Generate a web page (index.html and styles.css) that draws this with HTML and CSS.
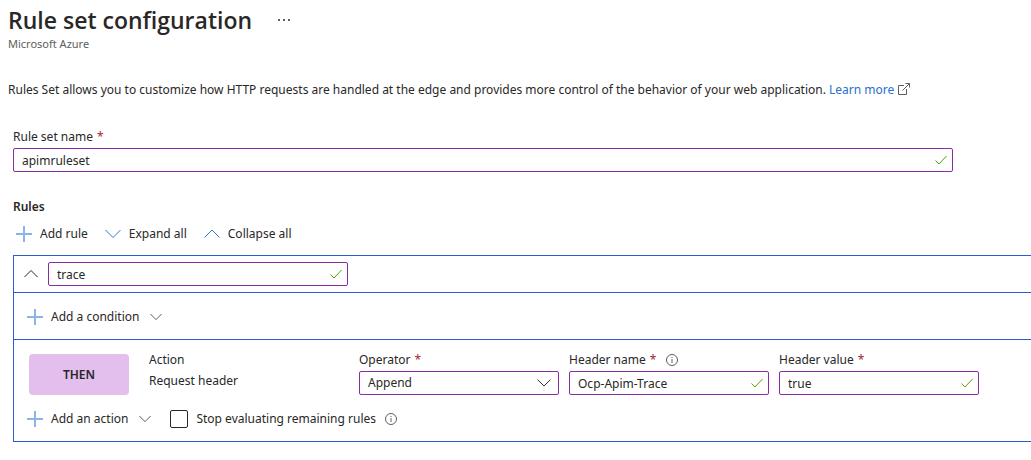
FILE: index.html
```html
<!DOCTYPE html>
<html lang="en">
<head>
<meta charset="utf-8">
<title>Rule set configuration</title>
<link rel="stylesheet" href="styles.css">
</head>
<body>
<svg class="defs" aria-hidden="true">
  <symbol id="plus" viewBox="0 0 16 16"><path d="M8 0v16M0 8h16"/></symbol>
  <symbol id="down" viewBox="0 0 16 16"><path d="M0.500 4l7.500 7.500L15.500 4"/></symbol>
  <symbol id="up" viewBox="0 0 16 16"><path d="M0.500 11.500L8 4l7.500 7.500"/></symbol>
  <symbol id="check" viewBox="0 0 12 12"><path d="M0.500 6.500l3.500 3.500L11.500 2"/></symbol>
  <symbol id="info" viewBox="0 0 12 12"><circle cx="6" cy="6" r="5.500"/><path d="M6 5v4M6 3v1"/></symbol>
  <symbol id="external" viewBox="0 0 12 12"><path d="M6 2.500H0.500v9h8V6M4.500 7.500l7-7M7.500 0.500h4v4"/></symbol>
</svg>
<header class="header">
  <div class="title-row">
    <h1 class="title">Rule set configuration</h1>
    <button class="more" type="button" aria-label="More options"><svg class="dots" viewBox="0 0 12 2"><path d="M0 0h2v2H0zM5 0h2v2H5zM10 0h2v2h-2z"/></svg></button>
  </div>
  <p class="subtitle">Microsoft Azure</p>
</header>
<p class="intro">Rules Set allows you to customize how HTTP requests are handled at the edge and provides more control of the behavior of your web application. <a class="link" href="#">Learn more<svg class="icon small gray"><use href="#external"/></svg></a></p>
<main class="main">
  <div class="field name-field">
    <label class="label" for="set-name">Rule set name <span class="required">*</span></label>
    <div class="control"><input class="input" id="set-name" type="text" value="apimruleset"><svg class="icon small check"><use href="#check"/></svg></div>
  </div>
  <h2 class="section-title">Rules</h2>
  <div class="toolbar">
    <button class="command" type="button"><svg class="icon blue plus"><use href="#plus"/></svg>Add rule</button>
    <button class="command" type="button"><svg class="icon blue"><use href="#down"/></svg>Expand all</button>
    <button class="command" type="button"><svg class="icon blue"><use href="#up"/></svg>Collapse all</button>
  </div>
  <section class="rule">
    <div class="rule-head">
      <button class="toggle" type="button" aria-label="Collapse rule"><svg class="icon medium dark"><use href="#up"/></svg></button>
      <div class="control rule-name"><input class="input" type="text" value="trace" aria-label="Rule name"><svg class="icon small check"><use href="#check"/></svg></div>
    </div>
    <div class="conditions">
      <button class="command add" type="button"><svg class="icon blue plus"><use href="#plus"/></svg>Add a condition<svg class="icon small gray caret-end"><use href="#down"/></svg></button>
    </div>
    <div class="actions">
      <div class="action-row">
        <div class="then">THEN</div>
        <div class="action-type"><span class="label">Action</span><span class="action-name">Request header</span></div>
        <div class="field">
          <label class="label" for="operator">Operator <span class="required">*</span></label>
          <div class="control"><select class="input select" id="operator"><option>Append</option></select><svg class="icon medium dark caret"><use href="#down"/></svg></div>
        </div>
        <div class="field">
          <label class="label" for="header-name">Header name <span class="required">*</span><svg class="icon small gray info"><use href="#info"/></svg></label>
          <div class="control"><input class="input" id="header-name" type="text" value="Ocp-Apim-Trace"><svg class="icon small check"><use href="#check"/></svg></div>
        </div>
        <div class="field">
          <label class="label" for="header-value">Header value <span class="required">*</span></label>
          <div class="control"><input class="input" id="header-value" type="text" value="true"><svg class="icon small check"><use href="#check"/></svg></div>
        </div>
      </div>
      <div class="action-footer">
        <button class="command add" type="button"><svg class="icon blue plus"><use href="#plus"/></svg>Add an action<svg class="icon small gray caret-end"><use href="#down"/></svg></button>
        <label class="stop"><input class="checkbox" type="checkbox">Stop evaluating remaining rules</label>
        <svg class="icon small gray"><use href="#info"/></svg>
      </div>
    </div>
  </section>
</main>
</body>
</html>
```
FILE: styles.css
```css
* { box-sizing: border-box; }
body {
  margin: 0;
  background: #fff;
  color: #292827;
  font: 12px/18px "Segoe UI", "Noto Sans", "Open Sans", sans-serif;
}
h1, h2, p { margin: 0; }
button, input, select { font: inherit; color: inherit; }
button { border: 0; padding: 0; background: none; cursor: pointer; }
.defs { position: absolute; width: 0; height: 0; }
symbol path { vector-effect: non-scaling-stroke; }

.icon { width: 16px; height: 16px; flex: none; fill: none; stroke: currentColor; stroke-width: 1; }
.icon.small { width: 12px; height: 12px; }
.icon.medium { width: 14px; height: 14px; }
.blue { color: #2f74d5; }
.icon.plus { color: #8ab4ea; stroke-width: 2; }
.gray { color: #605e5c; }
.dark { color: #292827; }

.header { padding: 4px 8px 0; }
.title-row { display: flex; align-items: center; gap: 26px; }
.title { font-family: "Segoe UI", "Open Sans", sans-serif; font-size: 23px; line-height: 32px; font-weight: 600; }
.more { display: flex; }
.dots { width: 12px; height: 2px; fill: #605e5c; }
.subtitle { font-size: 11px; line-height: 16px; color: #605e5c; }
.intro { padding: 29px 8px 0; }
.link { color: #2a6fd0; text-decoration: none; }
.link .icon { margin-left: 4px; vertical-align: -1px; }

.main { padding: 28px 0 18px 13px; }
.label { display: flex; align-items: center; gap: 4px; height: 20px; }
.required { color: #a4262c; }
.info { margin-left: 6px; }
.field { flex: 0 1 200px; display: flex; flex-direction: column; gap: 1px; }
.name-field { max-width: 940px; }
.control { position: relative; }
.input {
  display: block;
  width: 100%;
  height: 24px;
  padding: 0 32px 0 8px;
  border: 1px solid #8a2da5;
  border-radius: 2px;
  background: #fff;
  outline: 0;
}
.select { appearance: none; }
.control .icon { position: absolute; right: 6px; top: 6px; pointer-events: none; }
.control .caret { right: 8px; top: 5px; }
.icon.check { color: #57a300; }

.section-title { margin-top: 26px; font-size: 12px; line-height: 18px; font-weight: 600; }
.toolbar { display: flex; gap: 17px; padding: 6px 3px 9px; }
.command { display: flex; align-items: center; gap: 8px; height: 24px; }
.caret-end { margin-left: 3px; }

.rule { border: 1px solid #2b5cd0; border-right: 0; }
.rule-head { display: flex; align-items: center; gap: 10px; padding: 6px 10px; border-bottom: 1px solid #2b5cd0; }
.toggle { display: flex; }
.rule-name { flex: 0 1 300px; }
.conditions { padding: 12px 13px 10px; border-bottom: 1px solid #2b5cd0; }
.actions { padding: 10px 13px; }
.action-row { display: flex; gap: 10px; padding-left: 2px; }
.then {
  flex: none;
  display: grid;
  place-items: center;
  width: 100px;
  height: 41px;
  margin: 4px 10px 0 0;
  border-radius: 4px;
  background: #e2bfec;
  font-weight: 600;
}
.action-type { flex: 0 0 200px; display: flex; flex-direction: column; gap: 2px; }
.action-footer { display: flex; align-items: center; gap: 9px; padding-top: 12px; }
.stop { display: flex; align-items: center; gap: 8px; margin-left: 10px; }
.checkbox { appearance: none; width: 18px; height: 18px; margin: 0; border: 1px solid #292827; border-radius: 2px; }
```
